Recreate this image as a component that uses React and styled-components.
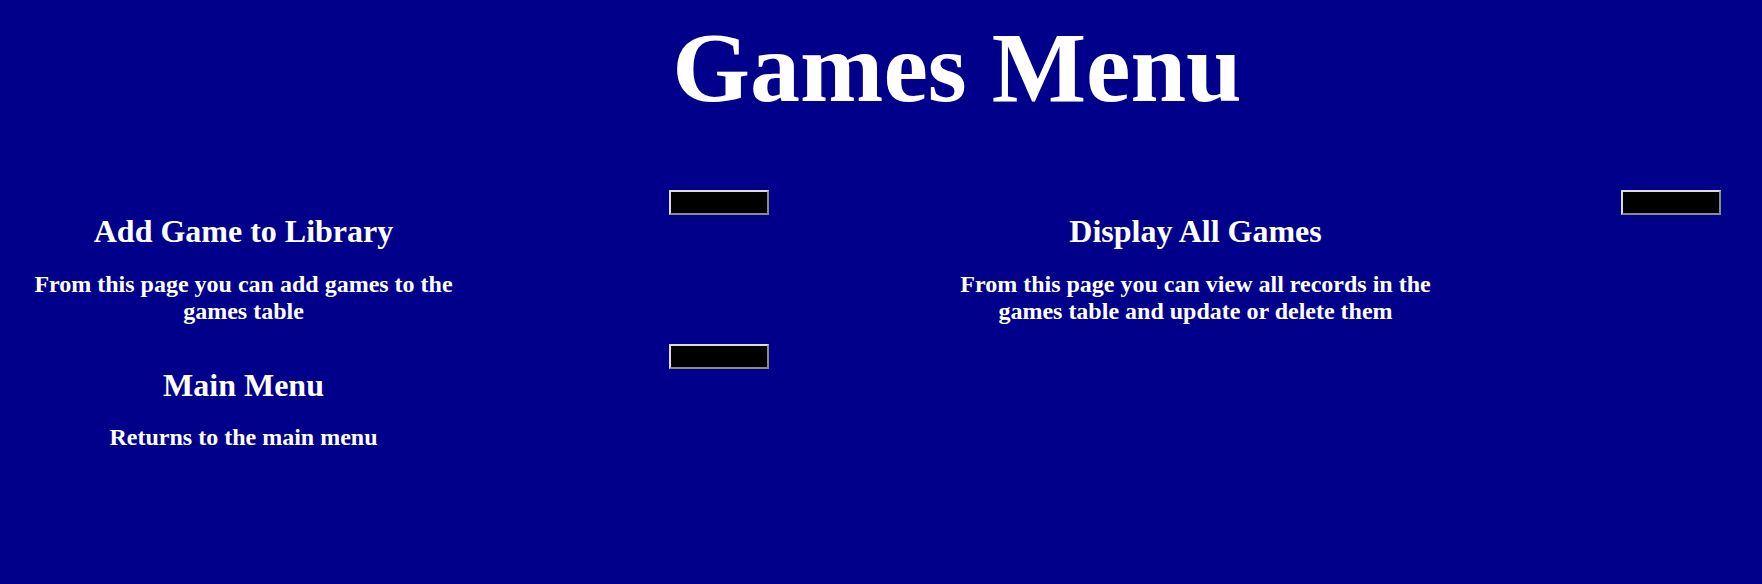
import React from "react";
import styled, { createGlobalStyle } from "styled-components";

const GlobalStyle = createGlobalStyle`
  html, body {
    background: #00008b;
  }
  body {
    margin: 8px;
    font-family: "Liberation Serif", "Times New Roman", serif;
    color: #ffffff;
  }
`;

const Page = styled.div`
  display: flex;
  flex-direction: column;
`;

const Title = styled.h1`
  margin: 2px 0 65px 152px;
  font-size: 100px;
  font-weight: 700;
  line-height: normal;
  text-align: center;
`;

const Columns = styled.div`
  display: grid;
  grid-template-columns: 952px 1fr;
  align-items: start;
`;

const Column = styled.div`
  display: flex;
  flex-direction: column;
`;

const Item = styled.div`
  display: flex;
  align-items: flex-start;
`;

const TextBlock = styled.div`
  width: 471px;
  flex: none;
  text-align: center;
`;

const Heading = styled.h2`
  margin: 23.4px 0 20.4px;
  font-size: 32px;
  font-weight: 700;
  line-height: normal;
`;

const Description = styled.p`
  margin: 19.9px 0 18.9px;
  font-size: 24px;
  font-weight: 700;
  line-height: normal;
`;

const NavButton = styled.button`
  margin-left: 190px;
  width: 100px;
  height: 25px;
  flex: none;
  padding: 0;
  background: #000000;
  border-style: solid;
  border-width: 2px;
  border-color: #dcdcdc #8a8a8a #8a8a8a #dcdcdc;
  cursor: pointer;
`;

function MenuItem({ title, text }) {
  return (
    <Item>
      <TextBlock>
        <Heading>{title}</Heading>
        <Description>{text}</Description>
      </TextBlock>
      <NavButton type="button" aria-label={title} />
    </Item>
  );
}

export default function App() {
  return (
    <>
      <GlobalStyle />
      <Page>
        <Title>Games Menu</Title>
        <Columns>
          <Column>
            <MenuItem
              title="Add Game to Library"
              text="From this page you can add games to the games table"
            />
            <MenuItem title="Main Menu" text="Returns to the main menu" />
          </Column>
          <Column>
            <MenuItem
              title="Display All Games"
              text="From this page you can view all records in the games table and update or delete them"
            />
          </Column>
        </Columns>
      </Page>
    </>
  );
}
